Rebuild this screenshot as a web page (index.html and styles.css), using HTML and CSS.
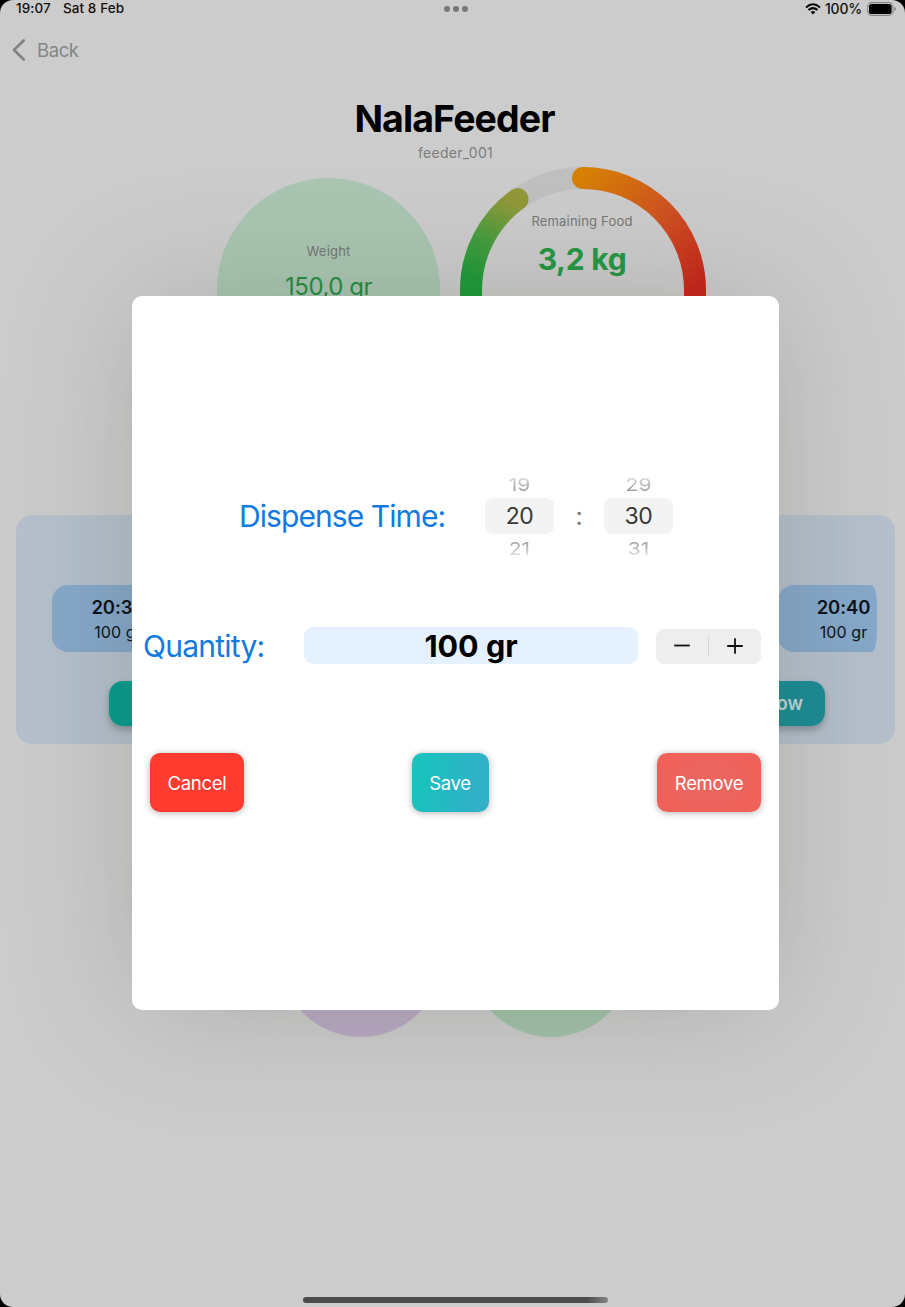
FILE: index.html
```html
<!DOCTYPE html>
<html lang="en">
<head>
<meta charset="utf-8">
<title>NalaFeeder</title>
<link rel="stylesheet" href="styles.css">
</head>
<body>
<div class="screen">
  <header class="status">
    <div class="status-left"><span class="clock">19:07</span><span class="date">Sat 8 Feb</span></div>
    <div class="dots"><i></i><i></i><i></i></div>
    <div class="status-right">
      <svg class="wifi" viewBox="0 0 16 12"><g fill="none" stroke="#050505" stroke-width="2"><path d="M1 4.4Q8-1.9 15 4.4"/><path d="M3.5 7.1Q8 3.1 12.5 7.1"/></g><path d="M5.6 9Q8 7 10.4 9L8 11.5Z" fill="#050505"/></svg>
      <span class="percent">100%</span>
      <svg class="battery" viewBox="0 0 29 14"><rect x=".6" y=".6" width="25.4" height="12.8" rx="4" fill="none" stroke="#858585" stroke-width="1.1"/><rect x="2" y="2" width="22.6" height="10" rx="2.6" fill="#000"/><path d="M27.3 4.8Q29 5.5 29 7T27.3 9.2Z" fill="#858585"/></svg>
    </div>
  </header>
  <nav class="back">
    <svg viewBox="0 0 14 22"><path d="M11.7 1.5 2 11l9.7 9.5" fill="none" stroke="#828282" stroke-width="2.6" stroke-linecap="round" stroke-linejoin="round"/></svg>
    <span>Back</span>
  </nav>
  <h1 class="title">NalaFeeder</h1>
  <p class="device">feeder_001</p>
  <section class="gauges">
    <div class="weight">
      <span class="gauge-label">Weight</span>
      <span class="weight-value">150,0 gr</span>
    </div>
    <div class="food">
      <svg class="ring" viewBox="0 0 246 246">
        <defs>
          <linearGradient id="hot" gradientUnits="userSpaceOnUse" x1="123" y1="11" x2="232" y2="125"><stop offset="0" stop-color="#d68004"/><stop offset=".5" stop-color="#d05422"/><stop offset="1" stop-color="#c9241b"/></linearGradient>
          <linearGradient id="cool" gradientUnits="userSpaceOnUse" x1="62" y1="40" x2="20" y2="115"><stop offset="0" stop-color="#93983a"/><stop offset=".55" stop-color="#469d3e"/><stop offset="1" stop-color="#1f9a3a"/></linearGradient>
        </defs>
        <circle cx="123" cy="123" r="112" fill="none" stroke="#bfc0bf" stroke-width="22"/>
        <path d="M123 11A112 112 0 0 1 235 123V150" fill="none" stroke="url(#hot)" stroke-width="22" stroke-linecap="round"/>
        <path d="M11 150V123A112 112 0 0 1 57.500 32.200" fill="none" stroke="url(#cool)" stroke-width="22" stroke-linecap="round"/>
      </svg>
      <div class="food-text"><span class="gauge-label">Remaining Food</span><span class="food-value">3,2 kg</span></div>
    </div>
  </section>
  <section class="schedule">
    <div class="slots">
      <div class="slot"><b>20:30</b><span>100 gr</span></div>
      <div class="slot last"><b>20:40</b><span>100 gr</span></div>
    </div>
    <div class="feed">Feed Now</div>
  </section>
  <section class="extras"><div class="disc purple"></div><div class="disc green"></div></section>
  <div class="home"></div>

  <div class="modal">
    <div class="time-row">
      <span class="label time-label">Dispense Time:</span>
      <div class="picker"><span class="prev">19</span><span class="chosen">20</span><span class="next">21</span></div>
      <span class="colon">:</span>
      <div class="picker"><span class="prev">29</span><span class="chosen">30</span><span class="next">31</span></div>
    </div>
    <div class="quantity-row">
      <span class="label quantity-label">Quantity:</span>
      <div class="amount">100 gr</div>
      <div class="stepper">
        <svg viewBox="0 0 18 18"><path d="M1.200 8.500H16.800" stroke="#111" stroke-width="1.8"/></svg>
        <i></i>
        <svg viewBox="0 0 18 18"><path d="M1.200 9H16.800M9 1.200V16.800" stroke="#111" stroke-width="1.8"/></svg>
      </div>
    </div>
    <div class="actions">
      <button class="btn cancel">Cancel</button>
      <button class="btn save">Save</button>
      <button class="btn remove">Remove</button>
    </div>
  </div>
</div>
</body>
</html>
```
FILE: styles.css
```css
* { box-sizing: border-box; }
body { margin: 0; background: #000; font-family: Inter, "Liberation Sans", sans-serif; }
.screen { position: relative; width: 905px; height: 1307px; overflow: hidden; display: flex; flex-direction: column; background: #ccc; border-radius: 13px; }
.status { height: 17px; flex: none; display: grid; grid-template-columns: 1fr auto 1fr; align-items: center; padding: 0 9px 0 16px; font-size: 13.5px; font-weight: 500; line-height: 17px; color: #111; }
.status-left { display: flex; gap: 12px; }
.clock { letter-spacing: .1px; }
.date { letter-spacing: .1px; }
.dots { display: flex; gap: 3px; margin-left: -1px; }
.dots i { width: 6px; height: 6px; border-radius: 50%; background: #777; }
.status-right { display: flex; justify-content: flex-end; align-items: center; }
.wifi { width: 16px; height: 12px; margin-right: 4px; }
.percent { width: 36px; margin-right: 6px; font-size: 14px; letter-spacing: -.2px; white-space: nowrap; }
.battery { width: 29px; height: 14px; }
.back { display: flex; align-items: center; gap: 11px; height: 28px; flex: none; margin: 19px 0 0 12px; font-size: 18.500px; line-height: 28px; letter-spacing: -.4px; color: #858585; }
.back svg { width: 14px; height: 22px; }
.title { margin: 32px 0 0; height: 44px; flex: none; text-align: center; font-size: 37.5px; line-height: 46px; letter-spacing: -.9px; font-weight: 700; color: #000; padding-left: 4px; }
.device { margin: 3px 0 0; height: 20px; flex: none; text-align: center; font-size: 14px; line-height: 20px; letter-spacing: .3px; color: #7c7c7c; padding-left: 6px; }
.gauges { display: flex; align-items: center; gap: 20px; height: 246px; flex: none; margin: 4px 0 0 217px; }
.weight { width: 223px; height: 223px; margin-top: -1px; border-radius: 50%; background: #aac6b2; display: flex; flex-direction: column; align-items: center; padding-top: 63px; }
.gauge-label { font-size: 13px; line-height: 20px; letter-spacing: .2px; color: #747774; white-space: nowrap; }
.weight-value { margin-top: 11px; font-size: 24px; line-height: 30px; letter-spacing: -.5px; color: #258d42; }
.food { display: grid; width: 246px; height: 246px; }
.ring, .food-text { grid-area: 1 / 1; }
.ring { width: 246px; height: 246px; }
.food-text { display: flex; flex-direction: column; align-items: center; padding: 44px 2px 0 0; }
.food-value { margin-top: 10px; font-size: 30px; line-height: 36px; letter-spacing: -.3px; font-weight: 700; color: #259844; }
.schedule { display: flex; flex-direction: column; flex: none; width: 879px; height: 229px; margin: 102px 0 0 16px; padding: 70px 18px 0 36px; border-radius: 16px; background: #b5c0cc; }
.slots { display: flex; justify-content: space-between; }
.slot { display: flex; flex-direction: column; align-items: center; width: 132px; height: 67px; padding: 9px 0 0; background: #87a8ca; border-radius: 16px; color: #0c1119; }
.slot.last { width: 99px; padding-left: 32px; border-radius: 16px 6px 6px 16px / 16px 20px 20px 16px; }
.slot b { font-size: 18.500px; line-height: 26px; font-weight: 600; letter-spacing: -.1px; }
.slot span { font-size: 16px; line-height: 24px; letter-spacing: .1px; }
.feed { width: 716px; height: 45px; margin: 29px 0 0 57px; padding: 0 22px; border-radius: 14px; background: linear-gradient(90deg, #079c8d, #1c8c96); box-shadow: 0 4px 7px rgba(0,0,0,.25); text-align: right; font-size: 18.500px; line-height: 45px; font-weight: 600; color: #c2d6d8; }
.extras { display: flex; gap: 26px; flex: none; margin: 129px 0 0 279px; }
.disc { width: 164px; height: 164px; border-radius: 50%; }
.purple { background: #baabc4; }
.green { background: #a4c2ab; }
.home { width: 305px; height: 6px; flex: none; margin: 260px 0 0 303px; border-radius: 3px; background: linear-gradient(90deg, #494b49, #494b49 93%, #858585); }
.modal { position: absolute; left: 132px; top: 296px; width: 647px; height: 714px; padding: 174px 18px 0 12px; border-radius: 10px; background: #fff; box-shadow: 0 0 130px rgba(45,60,38,.2); }
.label { font-size: 30px; line-height: 40px; color: #117ae0; white-space: nowrap; }
.time-row { display: flex; align-items: center; height: 92px; padding-left: 95px; }
.time-label { width: 246px; letter-spacing: -.92px; }
.quantity-label { width: 160px; letter-spacing: -.75px; margin-left: -1px; margin-right: 1px; }
.picker { width: 69px; height: 92px; display: flex; flex-direction: column; align-items: center; text-align: center; color: #383838; font-size: 23px; letter-spacing: -.4px; }
.picker .chosen { width: 69px; height: 36px; line-height: 37px; border-radius: 8px; background: #f3f3f3; }
.prev, .next { height: 28px; line-height: 29px; font-size: 21px; color: transparent; transform: scaleY(.85); background-clip: text; letter-spacing: 0; }
.prev { background-image: linear-gradient(#ddd 20%, #999 80%); }
.next { background-image: linear-gradient(#999 20%, #ddd 80%); }
.colon { width: 50px; text-align: center; font-size: 25px; line-height: 36px; color: #777; }
.quantity-row { display: flex; align-items: center; height: 37px; margin-top: 65px; }
.amount { width: 334px; height: 37px; border-radius: 9px; background: #e5f1ff; text-align: center; font-size: 30.5px; line-height: 38px; font-weight: 700; letter-spacing: 0; color: #000; }
.stepper { display: flex; align-items: center; justify-content: space-between; flex: none; width: 105px; height: 35px; margin: 1px 0 0 18px; padding: 0 17px; border-radius: 8px; background: #eee; }
.stepper svg { width: 18px; height: 18px; }
.stepper i { width: 1px; height: 20px; background: #d8d8d8; }
.actions { display: flex; justify-content: space-between; align-items: center; margin: 89px 0 0 6px; }
.btn { height: 59px; padding: 0; border: 0; border-radius: 10px; box-shadow: 0 1px 7px rgba(0,0,0,.3); font-family: inherit; font-size: 18.500px; letter-spacing: -.3px; color: #fff; }
.cancel { width: 94px; background: #ff3b30; }
.save { width: 77px; margin-left: -1px; background: linear-gradient(100deg, #18c3bd 10%, #31b0c8 85%); }
.remove { width: 104px; background: radial-gradient(closest-side, #ec655e 60%, #f0615a); }
```
